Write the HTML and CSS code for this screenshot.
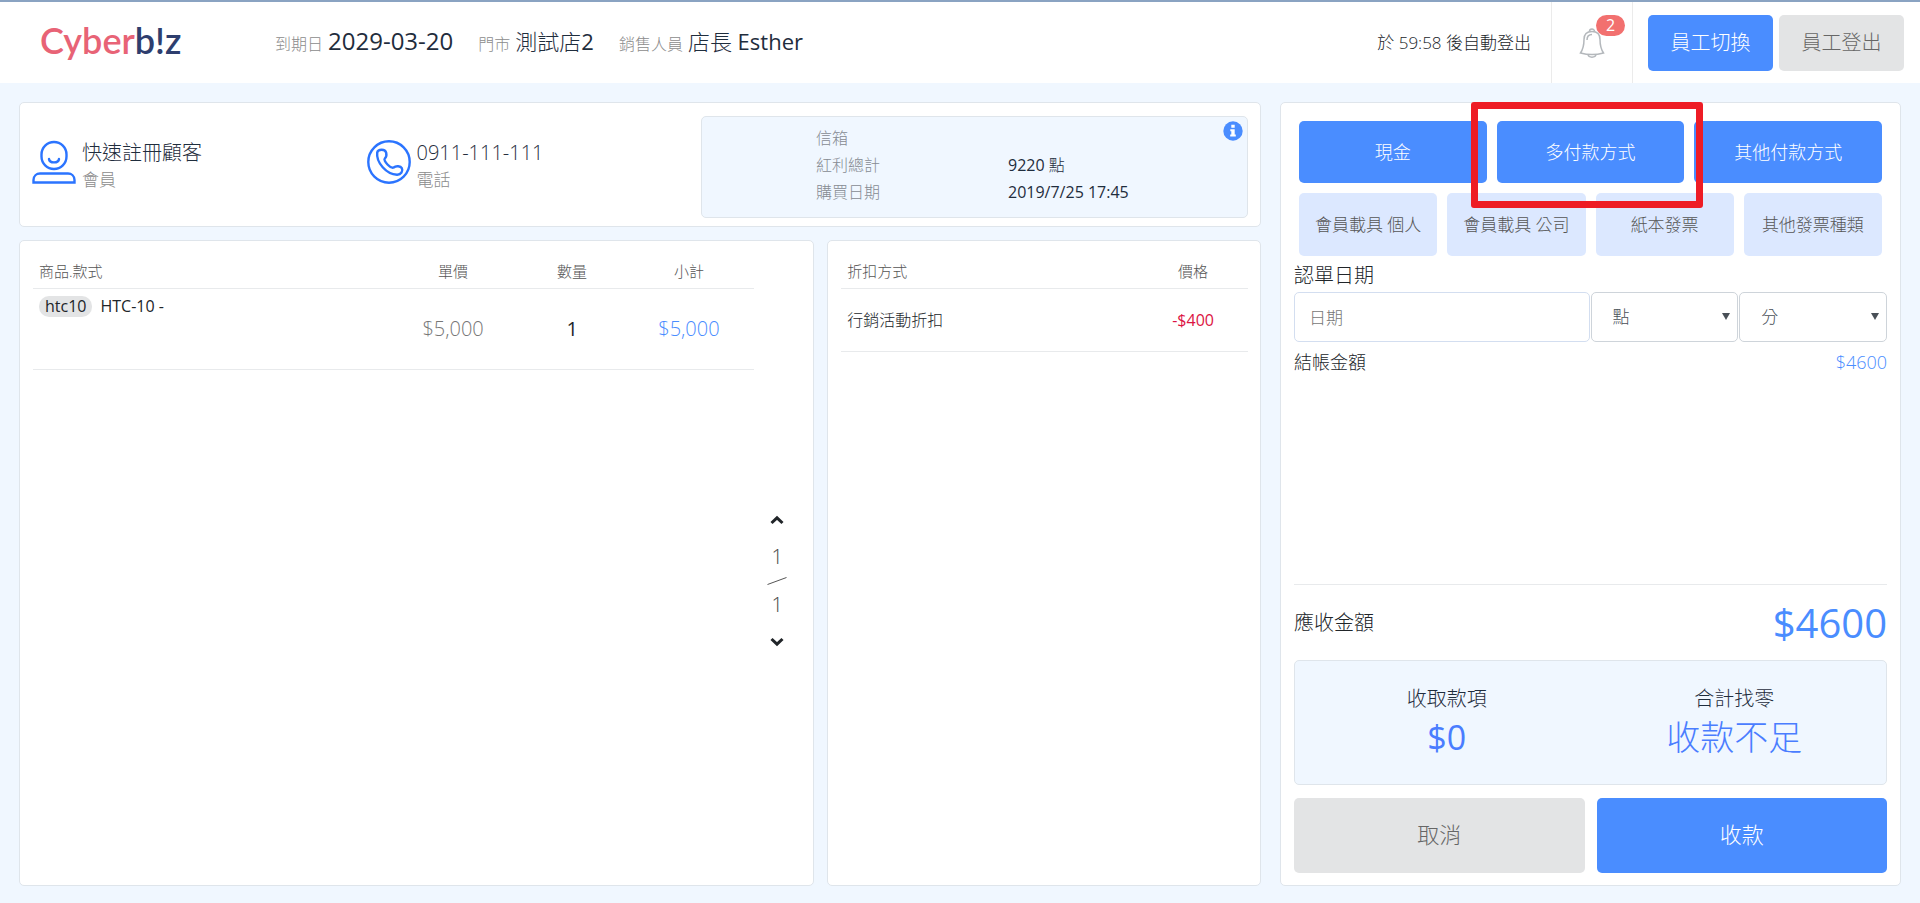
FILE: index.html
```
<!DOCTYPE html>
<html lang="zh-Hant">
<head>
<meta charset="utf-8">
<meta name="viewport" content="width=device-width, initial-scale=1">
<title>Cyberbiz POS</title>
<link rel="stylesheet" href="styles.css">
</head>
<body>
<header class="topbar">
  <a class="logo" href="#" aria-label="Cyberbiz">Cyber<span class="logo-dark">b!z</span></a>
  <dl class="session">
    <div class="session-item"><dt>到期日</dt><dd class="session-date">2029-03-20</dd></div>
    <div class="session-item"><dt>門市</dt><dd>測試店<span class="latin">2</span></dd></div>
    <div class="session-item"><dt>銷售人員</dt><dd>店長 <span class="latin">Esther</span></dd></div>
  </dl>
  <p class="timer">於 59:58 後自動登出</p>
  <button class="bell" type="button" aria-label="通知">
    <svg width="26" height="32" viewBox="0 0 26 32" fill="none" stroke="#b4b8bc" stroke-width="1.5">
      <path d="M10.500 4.500a2.500 2.500 0 0 1 5 0"/>
      <path d="M13 4.500c-5.500 0-8 3.500-8 8 0 6-.8 9.500-3.500 13.500 7.500 2 15.500 2 23 0-2.700-4-3.500-7.500-3.500-13.500 0-4.500-2.500-8-8-8z"/>
      <path d="M9 27.500c.5 3.500 7.500 3.500 8 0M8 13c0-3.500 1.500-5.500 5-5.500"/>
    </svg>
    <span class="bell-count">2</span>
  </button>
  <div class="staff">
    <button class="btn btn-primary" type="button">員工切換</button>
    <button class="btn btn-muted" type="button">員工登出</button>
  </div>
</header>

<main class="layout">
  <div class="left">
    <section class="card customer">
      <div class="contact">
        <svg width="44" height="44" viewBox="0 0 44 44" fill="none" stroke="#2b74ff" stroke-width="2.400" stroke-linecap="round">
          <rect x="9.500" y="2" width="25" height="27" rx="12.500"/>
          <path d="M17 19c.5 4.500 9.500 4.500 10 0"/>
          <path d="M1.500 42.500v-2.500c0-4 3-6.500 6.500-6.500h28c3.500 0 6.500 2.500 6.500 6.500v2.500z"/>
        </svg>
        <div><p class="contact-main">快速註冊顧客</p><p class="contact-sub">會員</p></div>
      </div>
      <div class="contact">
        <svg width="44" height="44" viewBox="0 0 44 44" fill="none" stroke="#2b74ff" stroke-width="2.400" stroke-linejoin="round">
          <circle cx="22" cy="22" r="20.700"/>
          <path d="M10.200 12.500c.8-3.500 8-3.800 9 .2.500 2.500.5 4-1.300 5.600-1.300 1.200.5 4 2.600 6.200s4.300 3.800 6.200 3c2.300-2 7-1.400 8.100.6 1.600 3-.8 6.700-4.800 6.600C19.500 34.300 9 22.500 10.200 12.500z"/>
        </svg>
        <div><p class="contact-main">0911-111-111</p><p class="contact-sub">電話</p></div>
      </div>
      <div class="info">
        <dl class="info-list">
          <dt>信箱</dt><dd></dd>
          <dt>紅利總計</dt><dd><span class="latin">9220</span> 點</dd>
          <dt>購買日期</dt><dd class="latin">2019/7/25 17:45</dd>
        </dl>
        <button class="info-btn" type="button" aria-label="詳細資訊">
          <svg width="20" height="20" viewBox="0 0 20 20"><circle cx="10" cy="10" r="9.700" fill="#4a8dff"/><path fill="#fff" d="M8.300 3.800h3.400v3H8.300zM7.300 8.200h4.400v5.200h1.100v2H7.200v-2h1.100v-3.200h-1z"/></svg>
        </button>
      </div>
    </section>

    <div class="lists">
      <section class="card items">
        <table class="grid items-table">
          <thead><tr><th class="col-name">商品.款式</th><th class="col-num">單價</th><th class="col-num">數量</th><th class="col-sum">小計</th></tr></thead>
          <tbody><tr>
            <td class="col-name latin"><span class="sku">htc10</span>HTC-10 -</td>
            <td class="num num-gray">$5,000</td><td class="num latin">1</td><td class="num num-blue col-sum">$5,000</td>
          </tr></tbody>
        </table>
        <nav class="pager" aria-label="分頁">
          <button class="pager-btn" type="button" aria-label="上一頁"><svg width="14" height="10" viewBox="0 0 14 10" fill="none" stroke="#212529" stroke-width="3"><path d="M1.500 8 7 2.800 12.500 8"/></svg></button>
          <span>1</span>
          <svg width="20" height="8" viewBox="0 0 20 8" stroke="#555" fill="none"><path d="M0.500 7.500l19-7"/></svg>
          <span>1</span>
          <button class="pager-btn" type="button" aria-label="下一頁"><svg width="14" height="10" viewBox="0 0 14 10" fill="none" stroke="#212529" stroke-width="3"><path d="M1.500 2 7 7.200 12.500 2"/></svg></button>
        </nav>
      </section>
      <section class="card discounts">
        <table class="grid discounts-table">
          <thead><tr><th class="col-name">折扣方式</th><th>價格</th></tr></thead>
          <tbody><tr><td class="col-name">行銷活動折扣</td><td class="negative latin">-$400</td></tr></tbody>
        </table>
      </section>
    </div>
  </div>

  <section class="card checkout">
    <div class="methods">
      <button class="btn btn-primary" type="button">現金</button>
      <div class="marked"><button class="btn btn-primary" type="button">多付款方式</button></div>
      <button class="btn btn-primary" type="button">其他付款方式</button>
    </div>
    <div class="invoices">
      <button class="btn btn-soft" type="button">會員載具 個人</button>
      <button class="btn btn-soft" type="button">會員載具 公司</button>
      <button class="btn btn-soft" type="button">紙本發票</button>
      <button class="btn btn-soft" type="button">其他發票種類</button>
    </div>
    <label class="date-label" for="date">認單日期</label>
    <div class="date-row">
      <input id="date" class="field field-date" type="text" placeholder="日期">
      <div class="select"><select class="field" aria-label="點"><option>點</option></select></div>
      <div class="select"><select class="field" aria-label="分"><option>分</option></select></div>
    </div>
    <div class="amount"><span>結帳金額</span><span class="blue">$4600</span></div>
    <div class="due"><span>應收金額</span><strong class="due-value">$4600</strong></div>
    <dl class="summary">
      <div><dt>收取款項</dt><dd class="latin">$0</dd></div>
      <div><dt>合計找零</dt><dd>收款不足</dd></div>
    </dl>
    <div class="actions">
      <button class="btn btn-muted" type="button">取消</button>
      <button class="btn btn-primary" type="button">收款</button>
    </div>
  </section>
</main>
</body>
</html>
```
FILE: styles.css
```
* { box-sizing: border-box; }
body, p, dl, dd { margin: 0; }
body {
  min-height: 100vh;
  display: flex;
  flex-direction: column;
  background: #f0f7ff;
  color: #212529;
  font-family: "Open Sans", "Noto Sans CJK TC", sans-serif;
  font-weight: 300;
  font-size: 16px;
  line-height: 24px;
}
button, input, select { font: inherit; color: inherit; }
button { border: 0; padding: 0; background: none; cursor: pointer; }

.topbar {
  display: flex;
  align-items: stretch;
  height: 83px;
  padding-right: 16px;
  background: #fff;
  border-top: 2px solid #8aa3c2;
}
.logo {
  width: 275px;
  padding: 13px 0 0 40px;
  color: #e86376;
  font: 600 36px/50px Lato, sans-serif;
  text-decoration: none;
}
.logo-dark { color: #2e3e6e; }
.session { display: flex; align-items: center; gap: 25px; flex: 1; }
.session-item { display: flex; align-items: baseline; gap: 5px; white-space: nowrap; }
.session dt { color: #8c8c8c; }
.session dd { font-size: 22px; color: #1f2d3d; }
.session .session-date { font-size: 24px; font-weight: 400; }
.latin { font-weight: 400; }
.timer { align-self: center; padding-right: 20px; font-size: 17px; white-space: nowrap; }
.bell {
  position: relative;
  width: 82px;
  border-left: 1px solid #ebebeb;
  border-right: 1px solid #ebebeb;
}
.bell svg { display: block; margin: 0 auto 0 27px; }
.bell-count {
  position: absolute;
  top: 13px;
  right: 7px;
  width: 29px;
  border-radius: 11px;
  background: #f2706f;
  color: #fff;
  font-size: 16px;
  font-weight: 400;
  line-height: 21px;
}
.staff { display: flex; align-items: center; gap: 6px; padding-left: 15px; }
.staff .btn { width: 125px; height: 56px; font-size: 20px; }

.btn { border-radius: 5px; text-align: center; white-space: nowrap; }
.btn-primary { background: #4a8dff; color: #fff; }
.btn-muted { background: #e3e4e5; color: #666; }
.btn-soft { background: #dce8ff; color: #555; }

.layout {
  flex: 1;
  display: grid;
  grid-template-columns: minmax(0, 2fr) minmax(0, 1fr);
  gap: 19px;
  padding: 19px 19px 17px;
}
.left { display: flex; flex-direction: column; gap: 13px; }
.card { background: #fff; border: 1px solid #dfe5eb; border-radius: 5px; }

.customer {
  display: grid;
  grid-template-columns: 1fr 1fr 547px;
  padding: 13px 12px 8px;
}
.contact { display: flex; gap: 6px; padding-top: 24px; }
.contact-main { font-size: 20px; line-height: 26px; color: #1f2d3d; }
.contact-sub { font-size: 17px; line-height: 27px; color: #8c8c8c; }
.info {
  position: relative;
  background: #f0f7ff;
  border: 1px solid #dfe5eb;
  border-radius: 5px;
  padding: 8px 0 11px 114px;
}
.info-list { display: grid; grid-template-columns: 192px 1fr; grid-auto-rows: 27px; line-height: 27px; }
.info-list dt { color: #868b92; }
.info-list dd { color: #1f2d3d; }
.info-btn { position: absolute; top: 4px; right: 4px; line-height: 0; }

.lists { flex: 1; display: grid; grid-template-columns: minmax(0, 11fr) minmax(0, 6fr); gap: 13px; }
.items { display: flex; align-items: flex-start; padding: 13px 13px 0; }
.discounts { padding: 13px 12px 0 13px; }
.grid { width: 100%; table-layout: fixed; border-collapse: collapse; }
.grid th { height: 34px; padding: 0; font-size: 15px; font-weight: 300; color: #555; border-bottom: 1px solid #e8eaec; }
.grid td { padding: 0; text-align: center; border-bottom: 1px solid #e8eaec; }
.grid .col-name { width: 50%; padding-left: 6px; text-align: left; }
.grid .col-num { width: 16.5%; }
.grid .col-sum { padding-right: 8px; }
.items-table { flex: 1; }
.items-table td { height: 81px; }
.items-table td.col-name { vertical-align: top; padding-top: 5px; }
.discounts-table .col-name { width: 73%; }
.discounts-table td { height: 63px; }
.sku { display: inline-block; margin-right: 8px; padding: 0 6px; border-radius: 10px; background: #e3e4e5; line-height: 21px; }
.num { font-size: 20px; }
.num-gray { color: #777; }
.num-blue, .blue { color: #4a8dff; }
.grid .negative { color: #dc1443; }
.pager {
  align-self: center;
  display: flex;
  flex-direction: column;
  align-items: center;
  gap: 6px;
  width: 46px;
  padding-top: 22px;
  font-size: 20px;
  line-height: 28px;
  color: #444;
}
.pager-btn { display: flex; padding: 12px; }

.checkout { display: flex; flex-direction: column; padding: 18px 13px 12px; font-size: 18px; }
.methods, .invoices { display: grid; gap: 10px; padding: 0 5px; font-size: 17px; }
.methods { grid-template-columns: repeat(3, minmax(0, 1fr)); grid-auto-rows: 62px; margin-bottom: 10px; }
.invoices { grid-template-columns: repeat(4, minmax(0, 1fr)); grid-auto-rows: 63px; }
.methods .btn { font-size: 18px; }
.marked { position: relative; display: grid; }
.marked::after {
  content: "";
  position: absolute;
  inset: -19px -19px -25px -26px;
  border: 7px solid #ee1c25;
  border-radius: 3px;
  pointer-events: none;
}
.date-label { padding-top: 4px; font-size: 20px; line-height: 32px; }
.date-row { display: grid; grid-template-columns: 2fr 1fr 1fr; gap: 1px; }
.field {
  width: 100%;
  height: 50px;
  padding: 0 14px;
  border: 1px solid #ced4da;
  border-radius: 5px;
  background: #fff;
  color: #495057;
  font-size: 17px;
}
.field-date { border-color: #d3def0; }
.field-date::placeholder { color: #777; opacity: 1; }
.select { position: relative; }
.select .field { appearance: none; padding-left: 21px; }
.select::after {
  content: "";
  position: absolute;
  top: 21px;
  right: 8px;
  border: 4px solid transparent;
  border-top: 7px solid #495057;
  border-bottom: 0;
  pointer-events: none;
}
.amount { display: flex; justify-content: space-between; flex: 1; line-height: 40px; }
.due {
  display: flex;
  justify-content: space-between;
  align-items: center;
  height: 76px;
  border-top: 1px solid #e8eaec;
  font-size: 20px;
}
.due-value { color: #4a8dff; font-size: 40px; font-weight: 400; }
.summary {
  display: grid;
  grid-template-columns: 1fr 1fr;
  padding: 23px 8px 24px;
  border: 1px solid #dfe5eb;
  border-radius: 5px;
  background: #f0f7ff;
  text-align: center;
}
.summary dt { font-size: 20px; line-height: 30px; color: #1f2d3d; }
.summary dd { font-size: 34px; line-height: 46px; color: #4a7dff; }
.actions { display: grid; grid-template-columns: 1fr 1fr; gap: 12px; margin-top: 13px; }
.actions .btn { height: 75px; padding-bottom: 3px; font-size: 22px; }
```
